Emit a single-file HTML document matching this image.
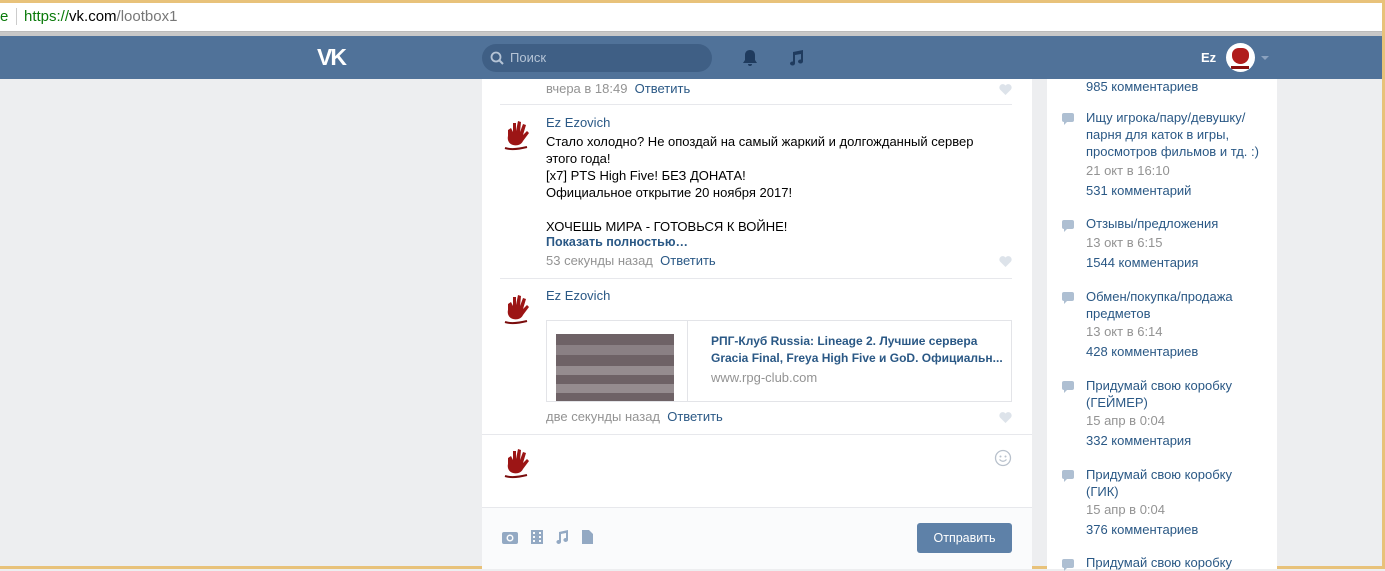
<!DOCTYPE html><html><head><meta charset="utf-8"><style>
*{margin:0;padding:0;box-sizing:border-box}
body{width:1385px;height:569px;overflow:hidden;background:#edeef0;font-family:"Liberation Sans","Noto Sans CJK SC",sans-serif;font-size:13px;color:#000;position:relative}
.a{position:absolute;white-space:nowrap}
.lk{color:#2a5885}.g{color:#939393}
.hand{position:absolute;width:32px;height:36px}
.ri .a{left:1086px}
.bub{position:absolute;left:1062px;width:12px;height:9px;background:#aebfd2;border-radius:2px}
.bub:after{content:"";position:absolute;left:2px;bottom:-3px;border:3px solid transparent;border-top-color:#aebfd2;border-left-color:#aebfd2}
</style></head><body>
<div class="a" style="left:0;top:0;width:1385px;height:3px;background:#e8c27a"></div>
<div class="a" style="left:0;top:3px;width:1382px;height:29px;background:#fff;border-bottom:1px solid #bbb"></div>
<div class="a" style="left:0;top:8px;font-size:15px;color:#0a7a0a">e</div>
<div class="a" style="left:16px;top:8px;width:1px;height:17px;background:#ccc"></div>
<div class="a" style="left:24px;top:8px;font-size:15px"><span style="color:#0a7a0a">https://</span>vk.com<span style="color:#777">/lootbox1</span></div>
<div class="a" style="left:0;top:32px;width:1382px;height:4px;background:#c8c8c8"></div>
<div class="a" style="left:0;top:36px;width:1382px;height:43px;background:#507299"></div>
<div class="a" style="left:1382px;top:0;width:3px;height:569px;background:#e8c27a"></div>
<div class="a" style="left:0;top:566px;width:1385px;height:3px;background:#e8c27a"></div>
<div class="a" style="left:317px;top:44px;font-size:23px;font-weight:bold;color:#fff;letter-spacing:-2px">VK</div>
<div class="a" style="left:482px;top:44px;width:230px;height:28px;border-radius:14px;background:#3f5f85"></div>
<svg class="a" style="left:490px;top:51px" width="14" height="14"><circle cx="6" cy="6" r="4.5" stroke="#b5c4d6" stroke-width="1.8" fill="none"/><path d="M9.5 9.5 13 13" stroke="#b5c4d6" stroke-width="2"/></svg>
<div class="a" style="left:510px;top:50px;color:#b5c4d6;font-size:13px">Поиск</div>
<svg class="a" style="left:741px;top:49px" width="18" height="18"><path d="M9 1c-3 0-5 2-5 5v5l-2 3h14l-2-3V6c0-3-2-5-5-5zM7 15h4a2 2 0 0 1-4 0z" fill="#1f3b5e"/></svg>
<svg class="a" style="left:787px;top:49px" width="18" height="18"><path d="M6 3l10-2v11.5a2.5 2 0 1 1-2-2V5L8 6v8.5a2.5 2 0 1 1-2-2z" fill="#1f3b5e"/></svg>
<div class="a" style="left:1201px;top:50px;color:#fff;font-weight:bold;font-size:13px">Ez</div>
<div class="a" style="left:1226px;top:43px;width:29px;height:29px;border-radius:50%;background:#fff;overflow:hidden"><div style="position:absolute;left:6px;top:5px;width:17px;height:16px;background:#b01c1c;border-radius:40% 40% 50% 50%"></div><div style="position:absolute;left:5px;top:23px;width:18px;height:3px;background:#8b0f0f"></div></div>
<div class="a" style="left:1261px;top:56px;border:4px solid transparent;border-top-color:#8ba2bf"></div>

<div class="a" style="left:482px;top:79px;width:550px;height:490px;background:#fff"></div>
<div class="a" style="left:1047px;top:79px;width:230px;height:490px;background:#fff"></div>

<div class="a g" style="left:546px;top:81px">вчера в 18:49 &nbsp;<span class="lk">Ответить</span></div>
<div class="a" style="left:500px;top:104px;width:512px;height:1px;background:#e7e8ec"></div>

<svg class="hand" style="left:502px;top:116px" viewBox="0 0 32 36"><path d="M6 14l3-2 2 4 0-9 3 0 0 8 2-10 3 1-1 10 3-8 3 1-3 10 4-4 2 2-6 8c-2 4-6 5-10 4s-6-5-5-9z" fill="#9c1515"/><path d="M3 32c6 2 14 1 22-1" stroke="#7a0d0d" stroke-width="2" fill="none"/></svg>
<div class="a lk" style="left:546px;top:115px">Ez Ezovich</div>
<div class="a" style="left:546px;top:133px;line-height:17px">Стало холодно? Не опоздай на самый жаркий и долгожданный сервер<br>этого года!<br>[x7] PTS High Five! БЕЗ ДОНАТА!<br>Официальное открытие 20 ноября 2017!<br><br>ХОЧЕШЬ МИРА - ГОТОВЬСЯ К ВОЙНЕ!</div>
<div class="a lk" style="left:546px;top:235px;font-weight:bold;font-size:12.5px">Показать полностью…</div>
<div class="a g" style="left:546px;top:253px">53 секунды назад &nbsp;<span class="lk">Ответить</span></div>
<div class="a" style="left:500px;top:278px;width:512px;height:1px;background:#e7e8ec"></div>

<svg class="hand" style="left:502px;top:290px" viewBox="0 0 32 36"><path d="M6 14l3-2 2 4 0-9 3 0 0 8 2-10 3 1-1 10 3-8 3 1-3 10 4-4 2 2-6 8c-2 4-6 5-10 4s-6-5-5-9z" fill="#9c1515"/><path d="M3 32c6 2 14 1 22-1" stroke="#7a0d0d" stroke-width="2" fill="none"/></svg>
<div class="a lk" style="left:546px;top:288px">Ez Ezovich</div>
<div class="a" style="left:546px;top:320px;width:466px;height:82px;border:1px solid #e3e4e8"></div>
<div class="a" style="left:687px;top:321px;width:1px;height:80px;background:#e3e4e8"></div>
<div class="a" style="left:556px;top:334px;width:118px;height:67px;background:#6e6266"></div>
<div class="a" style="left:556px;top:345px;width:118px;height:10px;background:#8a8084"></div>
<div class="a" style="left:556px;top:366px;width:118px;height:9px;background:#958c8f"></div>
<div class="a" style="left:556px;top:384px;width:118px;height:9px;background:#958c8f"></div>
<div class="a lk" style="left:711px;top:333px;font-weight:bold;line-height:17px;font-size:12px">РПГ-Клуб Russia: Lineage 2. Лучшие сервера<br>Gracia Final, Freya High Five и GoD. Официальн...</div>
<div class="a g" style="left:711px;top:370px;font-size:13px">www.rpg-club.com</div>
<div class="a g" style="left:546px;top:409px">две секунды назад &nbsp;<span class="lk">Ответить</span></div>
<div class="a" style="left:482px;top:434px;width:550px;height:1px;background:#e7e8ec"></div>
<svg class="hand" style="left:502px;top:444px" viewBox="0 0 32 36"><path d="M6 14l3-2 2 4 0-9 3 0 0 8 2-10 3 1-1 10 3-8 3 1-3 10 4-4 2 2-6 8c-2 4-6 5-10 4s-6-5-5-9z" fill="#9c1515"/><path d="M3 32c6 2 14 1 22-1" stroke="#7a0d0d" stroke-width="2" fill="none"/></svg>
<svg class="a" style="left:994px;top:449px" width="18" height="18"><circle cx="9" cy="9" r="7.5" stroke="#b8c1cc" fill="none" stroke-width="1.3"/><circle cx="6.5" cy="7.5" r="1" fill="#b8c1cc"/><circle cx="11.5" cy="7.5" r="1" fill="#b8c1cc"/><path d="M5.5 10.5q3.5 3.5 7 0" stroke="#b8c1cc" fill="none" stroke-width="1.2"/></svg>
<div class="a" style="left:482px;top:507px;width:550px;height:62px;background:#fafbfc;border-top:1px solid #e7e8ec"></div>
<svg class="a" style="left:501px;top:529px" width="100" height="16"><rect x="1" y="3" width="16" height="12" rx="2" fill="#93a9c3"/><circle cx="9" cy="9" r="3.5" fill="#fafbfc"/><circle cx="9" cy="9" r="2" fill="#93a9c3"/><rect x="30" y="1" width="12" height="14" fill="#93a9c3"/><rect x="32" y="3" width="2" height="2" fill="#fafbfc"/><rect x="32" y="7" width="2" height="2" fill="#fafbfc"/><rect x="32" y="11" width="2" height="2" fill="#fafbfc"/><rect x="38" y="3" width="2" height="2" fill="#fafbfc"/><rect x="38" y="7" width="2" height="2" fill="#fafbfc"/><rect x="38" y="11" width="2" height="2" fill="#fafbfc"/><path d="M58 3l9-2v10a2.3 2 0 1 1-2-2V4l-5 1v8a2.3 2 0 1 1-2-2z" fill="#93a9c3"/><path d="M81 1h7l4 4v10H81z" fill="#93a9c3"/></svg>
<div class="a" style="left:917px;top:523px;width:95px;height:30px;background:#5e81a8;border-radius:3px;color:#fff;font-size:12.5px;text-align:center;line-height:30px">Отправить</div>
<svg class="a" style="left:999px;top:84px" width="13" height="11"><path d="M6.5 11L1 5.5a3 3 0 0 1 5.5-4 3 3 0 0 1 5.5 4z" fill="#dde3ea"/></svg>
<svg class="a" style="left:999px;top:256px" width="13" height="11"><path d="M6.5 11L1 5.5a3 3 0 0 1 5.5-4 3 3 0 0 1 5.5 4z" fill="#dde3ea"/></svg>
<svg class="a" style="left:999px;top:412px" width="13" height="11"><path d="M6.5 11L1 5.5a3 3 0 0 1 5.5-4 3 3 0 0 1 5.5 4z" fill="#dde3ea"/></svg>

<div class="ri">
<div class="a lk" style="top:78px;line-height:17px">985 комментариев</div>
<div class="bub" style="top:113px"></div>
<div class="a lk" style="top:109px;line-height:17px">Ищу игрока/пару/девушку/<br>парня для каток в игры,<br>просмотров фильмов и тд. :)</div>
<div class="a g" style="top:163px">21 окт в 16:10</div>
<div class="a lk" style="top:183px">531 комментарий</div>
<div class="bub" style="top:220px"></div>
<div class="a lk" style="top:216px">Отзывы/предложения</div>
<div class="a g" style="top:235px">13 окт в 6:15</div>
<div class="a lk" style="top:255px">1544 комментария</div>
<div class="bub" style="top:292px"></div>
<div class="a lk" style="top:288px;line-height:17px">Обмен/покупка/продажа<br>предметов</div>
<div class="a g" style="top:324px">13 окт в 6:14</div>
<div class="a lk" style="top:344px">428 комментариев</div>
<div class="bub" style="top:381px"></div>
<div class="a lk" style="top:377px;line-height:17px">Придумай свою коробку<br>(ГЕЙМЕР)</div>
<div class="a g" style="top:413px">15 апр в 0:04</div>
<div class="a lk" style="top:433px">332 комментария</div>
<div class="bub" style="top:470px"></div>
<div class="a lk" style="top:466px;line-height:17px">Придумай свою коробку<br>(ГИК)</div>
<div class="a g" style="top:502px">15 апр в 0:04</div>
<div class="a lk" style="top:522px">376 комментариев</div>
<div class="bub" style="top:559px"></div>
<div class="a lk" style="top:555px">Придумай свою коробку</div>
</div>
</body></html>
